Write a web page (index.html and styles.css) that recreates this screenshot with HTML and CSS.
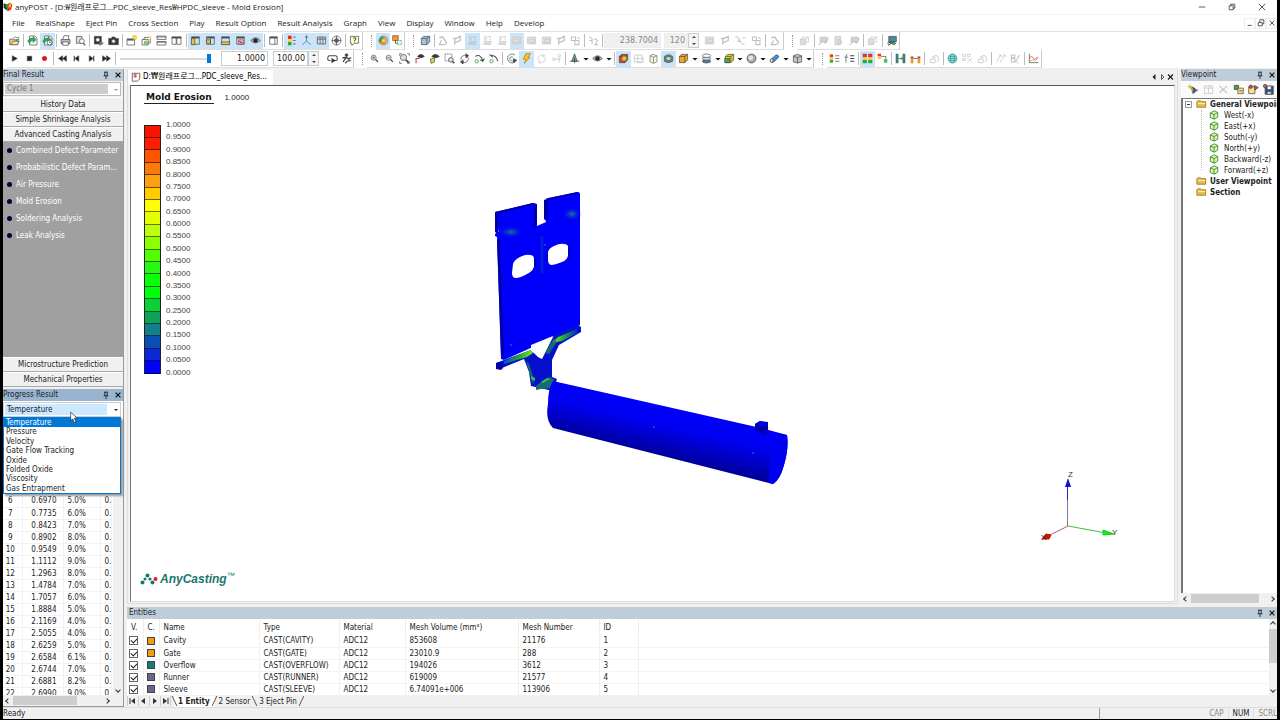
FILE: index.html
```
<!DOCTYPE html>
<html lang="en">
<head>
  <meta charset="UTF-8">
  <meta name="viewport" content="width=device-width, initial-scale=1.0">
  <title>anyPOST</title>
  <link rel="stylesheet" href="styles.css">
</head>
<body>
  <div class="app">
    <header class="titlebar">
      <svg class="app-icon" viewBox="0 0 16 16"><path d="M1 2l6 2v10l-6-5z" fill="#173d2a"/><path d="M7 3l4-2 4 3-2 8-6 3z" fill="#d8321e"/><path d="M9 4l4-2v5l-4 3z" fill="#f5c518"/><path d="M4 3l4 2v6l-4-3z" fill="#2e9a45"/></svg>
      <span class="title">anyPOST - [D:₩원래프로그...PDC_sleeve_Res₩HPDC_sleeve - Mold Erosion]</span>
      <div class="win-buttons">
        <button aria-label="Minimize"><svg viewBox="0 0 10 10"><path d="M1 5h8"/></svg></button>
        <button aria-label="Restore"><svg viewBox="0 0 10 10"><path d="M1.500 3.500h5v5h-5zM3.500 3.500v-2h5v5h-2"/></svg></button>
        <button aria-label="Close"><svg viewBox="0 0 10 10"><path d="M1 1l8 8M9 1l-8 8"/></svg></button>
      </div>
    </header>

    <nav class="menubar">
      <a href="#">File</a><a href="#">RealShape</a><a href="#">Eject Pin</a><a href="#">Cross Section</a><a href="#">Play</a><a href="#">Result Option</a><a href="#">Result Analysis</a><a href="#">Graph</a><a href="#">View</a><a href="#">Display</a><a href="#">Window</a><a href="#">Help</a><a href="#">Develop</a>
      <div class="mdi-buttons">
        <button aria-label="Minimize view"><svg viewBox="0 0 10 10"><path d="M2 8h5"/></svg></button>
        <button aria-label="Restore view"><svg viewBox="0 0 10 10"><path d="M1.500 4.500h5v4h-5zM3.500 4v-3h5v5h-2"/></svg></button>
        <button aria-label="Close view"><svg viewBox="0 0 10 10"><path d="M2 2l6 6M8 2l-6 6"/></svg></button>
      </div>
    </nav>

    <div class="toolbars">
      <div class="toolrow">
        <div class="group g-file" data-tools="open | reload reload2* | print preview | camera photo | newwin cascade tileh tilev | paneL* paneM* paneB* paneX* eye* | pane | legend* axes* table* wheel | help"></div>
        <div class="group g-color" data-tools="sphere* boxes"></div>
        <div class="group g-cut">
          <div class="tools" data-tools="cube | g-pin g-flag g-plane* g-plane g-plane g-box* g-box g-box g-flag g-steps | g-link |"></div>
          <input class="field off f-pos" type="text" value="238.7004" aria-label="Section position" disabled>
          <input class="field off f-div" type="text" value="120" aria-label="Section divisions" disabled>
          <span class="spin"><button aria-label="More divisions"></button><button aria-label="Fewer divisions"></button></span>
          <div class="tools" data-tools="g-box g-flag g-dots g-steps | g-pin"></div>
        </div>
        <div class="group g-extra" data-tools="g-layers | g-flag2 g-page g-flag2 | g-layers | monitor"></div>
      </div>
      <div class="toolrow">
        <div class="group g-play">
          <div class="tools" data-tools="play stop rec | rew prev next ffwd |"></div>
          <input class="slider" type="range" min="0" max="100" value="100" aria-label="Playback position">
          <input class="field f-now" type="text" value="1.0000" aria-label="Current value">
          <input class="field f-pct" type="text" value="100.00" aria-label="Percent">
          <span class="spin"><button aria-label="Increase"></button><button aria-label="Decrease"></button></span>
          <div class="tools" data-tools="loop runner"></div>
        </div>
        <div class="group g-view" data-tools="zoomin zoomout zoomfit eyeup eyecube zoombox rotate arcL arcR | spiral bolt* g-rotate g-nodes | cone v eye v | heart* g-mesh wire shade* ybox v disks v cubes v ball v tube v drum v"></div>
        <div class="group g-anal" data-tools="scale flist | grid2* swap | tee1 tee2 | g-undo | globe g-cross g-undo | g-lines g-bars | graph"></div>
      </div>
    </div>

    <main class="work">
      <aside class="left">
        <section class="panel final">
          <h2 class="caption">Final Result<span class="cap-tools"></span></h2>
          <div class="combo-off"><select class="cycle" aria-label="Cycle" disabled><option>Cycle 1</option></select></div>
          <button class="bar">History Data</button>
          <button class="bar">Simple Shrinkage Analysis</button>
          <button class="bar">Advanced Casting Analysis</button>
          <ul class="results">
            <li><a href="#">Combined Defect Parameter</a></li>
            <li><a href="#">Probabilistic Defect Param...</a></li>
            <li><a href="#">Air Pressure</a></li>
            <li><a href="#">Mold Erosion</a></li>
            <li><a href="#">Soldering Analysis</a></li>
            <li><a href="#">Leak Analysis</a></li>
          </ul>
          <button class="bar">Microstructure Prediction</button>
          <button class="bar">Mechanical Properties</button>
        </section>

        <section class="panel progress">
          <h2 class="caption active">Progress Result<span class="cap-tools"></span></h2>
          <div class="combo">
            <select class="kind" aria-label="Progress result"><option>Temperature</option></select>
            <ul class="dropdown" role="listbox" aria-label="Progress result options">
              <li role="option" aria-selected="true">Temperature</li>
              <li role="option">Pressure</li>
              <li role="option">Velocity</li>
              <li role="option">Gate Flow Tracking</li>
              <li role="option">Oxide</li>
              <li role="option">Folded Oxide</li>
              <li role="option">Viscosity</li>
              <li role="option">Gas Entrapment</li>
            </ul>
            <svg class="pointer" viewBox="0 0 12 18"><path d="M1 1v13l3-3 2.500 5.500 2.500-1-2.500-5.500h4.500z" fill="#fff" stroke="#222"/></svg>
          </div>
          <div class="steps">
            <div class="steps-clip">
              <table>
                <thead><tr><th></th><th></th><th></th><th></th></tr></thead>
                <tbody id="stepRows"></tbody>
              </table>
            </div>
            <div class="vscroll"><i></i><b></b></div>
          </div>
          <div class="hscroll"><i></i><span class="thumb"></span><b></b></div>
        </section>
      </aside>

      <div class="center">
        <div class="upper">
          <section class="document">
            <div class="doctabs">
              <a href="#" class="doctab"><svg viewBox="0 0 12 12"><path d="M1.500 1.500h9v7l-3 2.500h-6z" fill="#fff" stroke="#555"/><path d="M3 3.500h4M3 5.500h4M5 2v5" stroke="#c33"/></svg>D:₩원래프로그...PDC_sleeve_Res...</a>
              <svg class="tabnav" viewBox="0 0 24 8"><path d="M4.500 1v6l-3-3z" fill="#222"/><path d="M10.500 1.500v5l2.500-2.500z" fill="none" stroke="#555"/><path d="M17 1.500l5 5M22 1.500l-5 5" stroke="#222" stroke-width="1.300"/></svg>
            </div>
            <div class="canvas">
              <svg class="model" viewBox="470 180 340 320">
                <defs>
                  <linearGradient id="body" x1="680" y1="400" x2="664" y2="468" gradientUnits="userSpaceOnUse"><stop offset="0" stop-color="#00f"/><stop offset=".4" stop-color="#0000f2"/><stop offset=".68" stop-color="#00b"/><stop offset="1" stop-color="#00007d"/></linearGradient>
                  <linearGradient id="vein"><stop offset="0" stop-color="#0a50c0"/><stop offset=".5" stop-color="#1ea03c"/><stop offset="1" stop-color="#7af018"/></linearGradient>
                  <linearGradient id="vein2"><stop offset="0" stop-color="#7af018"/><stop offset=".5" stop-color="#1ea03c"/><stop offset="1" stop-color="#0a30c0"/></linearGradient>
                  <radialGradient id="spot"><stop offset="0" stop-color="#1c7a86"/><stop offset="1" stop-color="#00f" stop-opacity="0"/></radialGradient>
                </defs>
                <path fill="#0000fa" fill-rule="evenodd" d="M495 212l38-9 4 1v22l9-4v-1l-2-2v-18l4-3 30-6 2 1v132l-24 10-21 11-31 14-3-1-4-122-2-1v-2l4-3-4-3zM513 264q1-4 7-7 6-3 10-2 4 0 4 4v8q-1 4-7 7-7 4-11 4-4 0-4-5zM548 252q1-4 6-6 6-3 10-2 4 0 4 3v9q-1 4-6 6-7 3-11 3-3-1-3-5z"/>
                <path fill="#0000a8" d="M495 213l3 1v20l-3-2zM497 240l3-1 4 118-3-2zM544 200l4-1v19l-4 1zM534 205l3-1v20l-3 3zM495 212l38-9 3 1-38 10zM545 199l32-7 2 1-30 7z"/>
                <path fill="#0000b4" d="M534 257l2 2v8l-4 6 2-6zM568 246l2 2v8l-4 6 2-5z"/>
                <path stroke="#0632c8" stroke-width="3" opacity=".6" d="M542 236v37"/>
                <ellipse cx="511" cy="232" rx="13" ry="6" fill="url(#spot)"/>
                <ellipse cx="572" cy="214" rx="10" ry="7" fill="url(#spot)"/>
                <path fill="#0510cf" d="M496 363l8-3 27-10 7 7 4 2 12-24 24-10 3 2v5l-22 13-7 15v17l5 2-4 12-22-5-2-14-5-13-22 9-6-1z"/>
                <path fill="#0000a4" d="M496 363l5-1 2 6-2 2-5-1z"/>
                <path fill="url(#vein)" d="M504 361l26-11 3 3-6 4-23 7z"/>
                <path fill="url(#vein2)" d="M577 329l-19 8-6 6 10-2 15-8z"/>
                <path fill="#176b76" d="M536 386l6-5 8-4 4 3-3 8-10 1-5 1z"/>
                <path fill="#1c7c5a" opacity=".8" d="M526 361l3 3 5 15-1 6zM545 353l9-15 3 4-8 12z"/>
                <path fill="#32c23a" d="M531 376l4 2v3l-4-2zM541 382l6-4 3 1-7 4z"/>
                <path fill="#fff" d="M531 345l22-9-13 22-4-4-5-3z"/>
                <path fill="url(#body)" d="M553 381l208 47 26 7q2 13-3 30-4 15-11 19l-220-56q-8-8-5-24 0-16 5-23z"/>
                <path fill="#0000f0" d="M776 433l11 2q2 13-3 30-4 15-11 19l-4-1q-1-18 7-50z"/>
                <path fill="#0000b0" d="M755 424l5-3 8 1v8l-2 5-7-2-4-3z"/>
                <path fill="#0000e8" d="M755 424l5-3 8 2-4 3z"/>
                <path stroke="#456ce0" d="M653 427h2M752 453h2M510 345h2M544 245h2"/>
              </svg>
              <div class="result-title"><strong>Mold Erosion</strong><span>1.0000</span></div>
              <div class="legend">
                <div class="ramp" id="ramp"></div>
                <div class="ticks" id="ticks"></div>
              </div>
              <div class="brand">
                <svg viewBox="0 0 18 12"><g fill="#1a7770"><circle cx="2.500" cy="9.500" r="2"/><circle cx="5" cy="6" r="1.500"/><circle cx="7.500" cy="2.500" r="2"/><circle cx="10" cy="6" r="1.600"/><circle cx="12.500" cy="9.500" r="2"/></g><circle cx="15.500" cy="6" r="2" fill="#e02020"/></svg>
                <span>AnyCasting<sup>™</sup></span>
              </div>
              <svg class="triad" viewBox="1036 466 90 80">
                <path d="M1067.500 526v-38" stroke="#77a"/>
                <path d="M1067.500 500v-14" stroke="#22c"/>
                <path d="M1068 478l3 9h-6z" fill="#11c"/>
                <path d="M1068 526l38 7" stroke="#4b4"/>
                <path d="M1103 530l11 4-11 1z" fill="#1e2" stroke="#1c2"/>
                <path d="M1068 526l-20 10" stroke="#a66"/>
                <path d="M1042 539l4-5 5 1-2 4z" fill="#d10" stroke="#b10"/>
                <text x="1068" y="477">Z</text>
                <text x="1112" y="535">Y</text>
                <text x="1041" y="540">X</text>
              </svg>
            </div>
          </section>

          <aside class="panel viewpoint">
            <h2 class="caption">Viewpoint<span class="cap-tools"></span></h2>
            <div class="vp-tools" data-tools="addview g-winview g-x import export save"></div>
            <div class="tree">
              <ul>
                <li class="root"><span class="toggle"></span><svg class="folder"><use href="#folder"/></svg>General Viewpoint
                  <ul>
                    <li><svg><use href="#vcube"/></svg>West(-x)</li>
                    <li><svg><use href="#vcube"/></svg>East(+x)</li>
                    <li><svg><use href="#vcube"/></svg>South(-y)</li>
                    <li><svg><use href="#vcube"/></svg>North(+y)</li>
                    <li><svg><use href="#vcube"/></svg>Backward(-z)</li>
                    <li><svg><use href="#vcube"/></svg>Forward(+z)</li>
                  </ul>
                </li>
                <li class="root leaf"><svg class="folder"><use href="#folder"/></svg>User Viewpoint</li>
                <li class="root leaf"><svg class="folder"><use href="#folder"/></svg>Section</li>
              </ul>
            </div>
            <div class="hscroll wide"><i></i><span class="thumb"></span><b></b></div>
          </aside>
        </div>

        <section class="panel entities">
          <h2 class="caption">Entities<span class="cap-tools"></span></h2>
          <div class="ent-body">
            <table>
              <thead>
                <tr><th class="c-v">V.</th><th class="c-c">C.</th><th class="c-name">Name</th><th class="c-type">Type</th><th class="c-mat">Material</th><th class="c-vol">Mesh Volume (mm³)</th><th class="c-num">Mesh Number</th><th class="c-id">ID</th><th></th></tr>
              </thead>
              <tbody id="entityRows"></tbody>
            </table>
            <div class="vscroll"><i></i><span class="thumb"></span><b></b></div>
          </div>
          <div class="sheets">
            <svg class="sheetnav" viewBox="0 0 44 10"><path d="M.500 0v10M11.500 0v10M22.500 0v10M33.500 0v10M43.500 0v10" stroke="#ccc"/><path d="M3 2v6M41 2v6" stroke="#333"/><path d="M8 2v6L4 5zM18 2v6l-4-3zM26 2v6l4-3zM36 2v6l4-3z" fill="#333"/></svg>
            <a href="#" class="sheet on">1 Entity</a><a href="#" class="sheet back">2 Sensor</a><a href="#" class="sheet">3 Eject Pin</a>
          </div>
        </section>
      </div>
    </main>

    <footer class="status">
      <span class="ready">Ready</span>
      <span class="cell"></span><span class="key">CAP</span><span class="key on">NUM</span><span class="key">SCRL</span>
    </footer>
  </div>

  <svg class="sprite" aria-hidden="true">
    <symbol id="folder" viewBox="0 0 12 10"><path d="M1 8.500v-6l1-1h3l1 1h4.500v6z" fill="#e6c04a" stroke="#9a7d22"/><path d="M2 4h8v1H2z" fill="#fff0a8"/></symbol>
    <symbol id="vcube" viewBox="0 0 12 12"><path d="M1.500 3.500l5-2.500 4 2v5.500l-4 2.500-5-2z" fill="#d9f7a4" stroke="#38813a"/><path d="M1.500 3.500l4.500 2 4.500-2.500M6 5.500V11" fill="none" stroke="#38813a"/></symbol>
  </svg>
  <script src="script.js"></script>
</body>
</html>
```
FILE: styles.css
```
* { box-sizing: border-box; }
body {
  margin: 0;
  background: #000;
  color: #222;
  font-family: "DejaVu Sans Condensed", "Noto Sans CJK KR", sans-serif;
  font-size: 8px;
  line-height: 12px;
}
ul { list-style: none; margin: 0; padding: 0; }
a { color: inherit; text-decoration: none; }
button, input, select { font: inherit; color: inherit; margin: 0; padding: 0; border: 0; background: none; border-radius: 0; }
svg { display: block; flex: none; }
.sprite { position: absolute; width: 0; height: 0; }

.app {
  display: flex;
  flex-direction: column;
  height: 100vh;
  margin: 0 3px;
  border-bottom: 1px solid #000;
  background: #f0f0f0;
}

/* title and menu */
.titlebar {
  display: flex;
  align-items: center;
  height: 14px;
  background: #fff;
  font-family: "Open Sans", "Noto Sans CJK KR", sans-serif;
}
.app-icon { width: 10px; height: 10px; margin-right: 2px; }
.win-buttons { display: flex; margin-left: auto; }
.win-buttons button { width: 30px; height: 14px; display: grid; place-items: center; }
.win-buttons svg, .mdi-buttons svg { width: 8px; height: 8px; fill: none; stroke: #333; }
.menubar {
  display: flex;
  align-items: center;
  gap: 11px;
  height: 18px;
  padding-left: 9px;
  background: #fff;
  border-top: 1px solid #f4f4f4;
  border-bottom: 1px solid #e0e0e0;
  font-family: "Open Sans", sans-serif;
}
.mdi-buttons { display: flex; margin-left: auto; }
.mdi-buttons button { width: 11px; height: 11px; display: grid; place-items: center; border: 1px solid #eee; }

/* toolbars */
.toolbars { background: #fff; }
.toolrow { display: flex; height: 18px; }
.group {
  position: relative;
  display: flex;
  align-items: center;
  flex: none;
  margin-left: 13px;
  border-right: 1px solid #ccc;
  border-bottom: 1px solid #ddd;
}
.group:first-child { margin-left: 4px; }
.group:not(:first-child)::before {
  content: "";
  position: absolute;
  left: -5px;
  top: 3px;
  height: 12px;
  border-left: 1px dotted #999;
}
.tools { display: flex; flex: 1; align-items: center; }
.g-file { width: 356px; }
.g-color { width: 29px; }
.g-cut { width: 366px; }
.g-extra { width: 103px; }
.g-play { width: 347px; }
.g-view { width: 447px; }
.g-anal { width: 215px; }
.tool { flex: 1 1 15px; min-width: 0; height: 16px; display: grid; place-items: center; }
.tool svg { width: 11px; height: 11px; fill: none; stroke: #444; }
.tool.on { background: #cce4f7; }
.tool.dim svg { stroke: #c0c0c0; }
.tool.drop { flex: 0 1 8px; }
.tool.drop svg { width: 6px; height: 6px; }
.tool.small svg { width: 9px; height: 9px; }
.sep { flex: none; width: 1px; height: 13px; margin: 0 1px; background: #bbb; }
.field {
  height: 15px;
  border: 1px solid #ccc;
  padding: 0 2px;
  text-align: right;
  font-family: "DejaVu Sans", sans-serif;
}
.field.off { background: #f0f0f0; color: #888; border-color: #eee; }
.f-pos { width: 57px; margin-right: 3px; }
.f-div { width: 24px; }
.f-now { width: 47px; margin-right: 5px; }
.f-pct { width: 35px; }
.spin { display: flex; flex-direction: column; width: 11px; height: 15px; margin-right: 3px; border: 1px solid #ccc; background: #f4f4f4; }
.spin button { flex: 1; display: grid; place-items: center; }
.spin button::before { content: ""; border: 2px solid transparent; border-top: 0; border-bottom: 2px solid #444; }
.spin button + button::before { border-bottom: 0; border-top: 2px solid #444; }
.g-play .tools:first-child { flex: none; width: 110px; }
.g-play .tools:last-child { padding-left: 3px; }
.g-cut .tools:first-child { flex: none; width: 186px; }
.slider { width: 91px; height: 12px; margin: 0 10px 0 3px; appearance: none; }
.slider::-webkit-slider-runnable-track { height: 2px; background: #d8d8d8; }
.slider::-webkit-slider-thumb { appearance: none; width: 4px; height: 9px; margin-top: -4px; background: #0078d7; }

/* panels */
.work { display: flex; flex: 1; min-height: 0; padding-top: 1px; }
.caption {
  display: flex;
  align-items: center;
  flex: none;
  height: 12px;
  margin: 0;
  background: #bfcddb;
  font-size: 8px;
  font-weight: normal;
  line-height: 12px;
}
.caption.active { background: #99b4d1; }
.cap-tools { display: flex; gap: 4px; margin-left: auto; margin-right: 1px; }
.cap-tools svg { width: 8px; height: 8px; fill: none; stroke: #111; }
.panel { display: flex; flex-direction: column; }
.left { display: flex; flex-direction: column; flex: none; width: 121px; border-right: 1px solid #999; }
.final { flex: none; height: 318px; margin-bottom: 2px; }
.cycle, .kind {
  appearance: none;
  display: block;
  width: 118px;
  height: 14px;
  padding: 0 3px;
  border: 1px solid #bbb;
  background: linear-gradient(#ccc, #ccc) 1px 1px / 103px 10px no-repeat #fff;
  color: #777;
  opacity: 1;
}
.combo-off { position: relative; flex: none; height: 16px; padding-top: 1px; }
.bar { flex: none; height: 15px; border-bottom: 1px solid #aaa; border-top: 1px solid #fff; background: #f0f0f0; line-height: 12px; }
.results { flex: 1; background: #a0a0a0; color: #fff; }
.results li { display: flex; align-items: center; height: 17px; white-space: nowrap; overflow: hidden; }
.results li::before { content: ""; width: 5px; height: 5px; margin: 0 4px; border-radius: 50%; background: #000040; flex: none; }
.progress { flex: 1; min-height: 0; border-bottom: 1px solid #999; }
.combo { position: relative; flex: none; height: 17px; padding-top: 1px; background: #fff; }
.kind {
  height: 15px;
  border-color: #ccc;
  background: linear-gradient(#cce8ff, #cce8ff) 1px 1px / 102px 11px no-repeat #fff;
  color: #222;
}
.combo::after, .combo-off::after {
  content: "";
  position: absolute;
  right: 5px;
  top: 8px;
  border: 2px solid transparent;
  border-top-color: #222;
}
.combo-off::after { border-top-color: #999; }
.dropdown {
  position: absolute;
  z-index: 2;
  top: 16px;
  left: 0;
  display: flex;
  flex-direction: column;
  width: 118px;
  height: 77px;
  border: 1px solid #0078d7;
  background: #fff;
  box-shadow: 2px 2px 2px #999;
}
.dropdown li { flex: 1; padding-left: 2px; line-height: 9px; }
.dropdown [aria-selected] { background: #0078d7; color: #fff; }
.pointer { position: absolute; z-index: 3; left: 67px; top: 10px; width: 8px; height: 13px; }
.steps { display: flex; flex: 1; min-height: 0; background: #fff; }
.steps-clip { flex: 1; overflow: hidden; }
table { border-collapse: collapse; table-layout: fixed; }
th, td { padding: 0; font-weight: normal; text-align: left; white-space: nowrap; overflow: hidden; }
.steps table { width: 109px; }
.steps tr { height: 12px; }
.steps th { height: 77px; background: #fff; }
.steps td { border-right: 1px solid #f2f2f2; border-bottom: 1px solid #f2f2f2; line-height: 11px; }
.steps th:nth-child(1) { width: 19px; }
.steps th:nth-child(2) { width: 41px; }
.steps th:nth-child(3) { width: 37px; }
.steps td:nth-child(1) { text-align: center; padding-right: 4px; }
.steps td:nth-child(2) { text-align: right; padding-right: 6px; }
.steps td:nth-child(3) { padding-left: 4px; }
.steps td:nth-child(4) { padding-left: 4px; }

/* scrollbars */
.vscroll { display: flex; flex-direction: column; flex: none; width: 10px; padding: 3px 0; align-items: center; background: #f0f0f0; }
.hscroll { display: flex; align-items: center; flex: none; height: 11px; padding: 0 3px; background: #f0f0f0; }
.vscroll i, .vscroll b, .hscroll i, .hscroll b { width: 4px; height: 4px; border: solid #333; border-width: 1px 0 0 1px; }
.vscroll i { transform: rotate(45deg); }
.vscroll b { margin-top: auto; transform: rotate(225deg); }
.hscroll i { transform: rotate(-45deg); }
.hscroll b { margin-left: auto; transform: rotate(135deg); }
.hscroll .thumb { width: 64px; height: 9px; margin-left: 3px; background: #cdcdcd; }
.hscroll.wide .thumb { width: 68px; }
.progress .hscroll { padding-right: 14px; }
.entities .vscroll { width: 8px; }
.entities .vscroll .thumb { width: 8px; height: 34px; margin-top: 3px; background: #cdcdcd; }

/* document */
.center { display: flex; flex-direction: column; flex: 1; min-width: 0; padding-left: 3px; }
.upper { display: flex; flex: 1; min-height: 0; gap: 2px; }
.document { display: flex; flex-direction: column; flex: 1; min-width: 0; border: 1px solid #ddd; border-top: 0; padding: 0 2px 1px; }
.doctabs { display: flex; flex: none; align-items: center; justify-content: space-between; height: 16px; margin-left: -2px; }
.doctab { display: flex; align-items: center; gap: 2px; height: 15px; padding: 0 6px 0 3px; background: #fff; color: #000; }
.doctab svg { width: 10px; height: 10px; }
.tabnav { width: 24px; height: 8px; }
.canvas {
  position: relative;
  flex: 1;
  padding: 6px 13px;
  border: 1px solid #ddd;
  border-top: 1px solid #555;
  border-left: 1px solid #777;
  background: #fff;
}
.model { position: absolute; left: 339px; top: 94px; width: 340px; height: 320px; }
.result-title { display: flex; gap: 11px; font-family: "Liberation Sans", sans-serif; line-height: 12px; }
.result-title strong { padding: 0 2px; border-bottom: 1px solid #222; font-size: 9px; line-height: 10px; color: #111; font-family: "DejaVu Sans", sans-serif; }
.legend { display: flex; align-items: center; gap: 5px; height: 260px; margin-top: 15px; font-family: "Liberation Sans", sans-serif; }
.ramp { display: flex; flex-direction: column; width: 17px; height: 249px; border: 1px solid #222; border-bottom: 0; }
.ramp div { flex: 1; border-bottom: 1px solid rgba(0, 0, 0, 0.55); }
.ticks { display: flex; flex-direction: column; height: 260px; color: #444; }
.ticks span { flex: 1; line-height: 12px; }
.brand {
  position: absolute;
  left: 9px;
  bottom: 15px;
  display: flex;
  align-items: center;
  gap: 2px;
  color: #1a7770;
  font: italic bold 12px/14px "Liberation Sans", sans-serif;
}
.brand svg { width: 18px; height: 12px; }
.brand sup { font-size: 8px; line-height: 8px; font-style: normal; font-weight: normal; }
.triad { position: absolute; right: 48px; bottom: 55px; width: 90px; height: 80px; font: 8px "Liberation Sans", sans-serif; }
.triad text { fill: #333; }

/* viewpoint */
.viewpoint { flex: none; width: 97px; padding-left: 1px; overflow: hidden; }
.vp-tools { display: flex; flex: none; height: 17px; padding: 1px 0 1px 5px; align-items: center; background: #fafafa; }
.vp-tools .tool { flex: 0 0 15px; height: 14px; }
.tree { flex: 1; border-left: 2px solid #777; border-top: 1px solid #777; background: #fff; overflow: hidden; white-space: nowrap; }
.tree ul { position: relative; margin-left: 2px; }
.tree li { line-height: 11px; position: relative; }
.tree svg { display: inline-block; vertical-align: middle; width: 10px; height: 10px; margin: -2px 5px 0 0; }
.tree .folder { margin-right: 3px; width: 11px; }
.root { font-weight: bold; }
.root.leaf { padding-left: 11px; }
.toggle { display: inline-block; width: 7px; height: 7px; margin-right: 4px; border: 1px solid #999; vertical-align: middle; background: linear-gradient(#333, #333) center / 3px 1px no-repeat; }
.tree .root ul { margin-left: 16px; padding-left: 8px; font-weight: normal; }
.root ul::before { content: ""; position: absolute; left: 0; top: 0; height: 60px; border-left: 1px dotted #bbb; }

/* entities */
.entities { flex: none; height: 100px; margin-top: 3px; }
.entities .caption { padding-left: 2px; }
.ent-body { display: flex; flex: 1; min-height: 0; background: #fff; overflow: hidden; }
.entities table { flex: 1; width: 100%; }
.entities th { height: 16px; line-height: 15px; border-right: 1px solid #eee; padding-left: 4px; }
.entities td { height: 12px; line-height: 11px; border-right: 1px solid #f0f0f0; border-bottom: 1px solid #f4f4f4; padding-left: 4px; }
.entities th:last-child, .entities td:last-child { border-right: 0; }
.c-v, .c-c { width: 16px; }
.c-name { width: 100px; }
.c-type { width: 80px; }
.c-mat { width: 66px; }
.c-vol { width: 113px; }
.c-num { width: 81px; }
.c-id { width: 39px; }
.entities input {
  display: block;
  appearance: none;
  width: 9px;
  height: 9px;
  margin-left: -2px;
  border: 1px solid #666;
  position: relative;
}
.entities input:checked::after { content: ""; position: absolute; left: 1px; top: 1px; width: 5px; height: 3px; border: solid #222; border-width: 0 0 1px 1px; transform: rotate(-45deg); }
.swatch { display: block; width: 8px; height: 8px; margin-left: -1px; border: 1px solid #444; }
.sheets { display: flex; flex: none; height: 12px; align-items: center; background: #f0f0f0; }
.sheetnav { width: 44px; height: 10px; }
.sheet { position: relative; height: 11px; line-height: 11px; padding: 0 5px 0 4px; }
.sheet::after { content: ""; position: absolute; right: 0; top: 0; height: 10px; border-right: 1px solid #555; transform: skewX(-25deg); }
.sheet.back::after, .sheet.on::before { transform: skewX(25deg); }
.sheet.on { margin-left: 3px; background: #fff; font-weight: bold; }
.sheet.on::before { content: ""; position: absolute; left: 0; top: 0; height: 10px; border-left: 1px solid #555; }

/* status bar */
.status { display: flex; flex: none; height: 12px; border-top: 1px solid #ddd; color: #888; line-height: 12px; }
.ready { flex: 1; color: #222; }
.cell { width: 106px; border-left: 1px solid #999; }
.key { padding: 0 4px; border-right: 1px solid #ddd; }
.key.on { color: #222; }
.key:last-child { padding-right: 0; border: 0; }
```
FILE: script.js
```
// Icon bodies, all on a 16 x 16 grid
const box = '<path d="M2.500 2.500h11v11h-11z"/><path d="M2.500 4h11" stroke-width="2"/>';
const cube = c => `<path d="M2 5l3-3h9v8l-4 4H2z" fill="${c}"/><path d="M2 5h8v9M10 5l4-3"/>`;
const eyeShape = '<path d="M1 8q7-8 14 0q-7 7-14 0z" fill="#bbb"/><circle cx="8" cy="8" r="3" fill="#222"/>';
const lens = '<circle cx="6.500" cy="6.500" r="4.500" fill="#ddd"/><path d="M10 10l4 4" stroke-width="2.500"/>';
const cycleShape = '<path d="M3 10a5.500 5.500 0 0 1 8-6M13 6a5.500 5.500 0 0 1-8 7"/><path d="M10 1l4 3-4 3zM6 10l-4 3 4 3z" fill="#444"/>';

const icons = {
  open: '<path d="M1 14V6h5l1 1h6v7z" fill="#f0d070"/><path d="M3 14l3-5h9l-3 5z" fill="#ffe9a0"/><path d="M6 5q3-4 6-1l2-1v4h-4" stroke="#284"/>',
  reload: '<path d="M3.500 1.500h8l3 3v10h-11z" fill="#fff"/><path d="M1 9q3-6 8-4V2l4 5-4 4V8Q5 7 4 12z" fill="#3aa655" stroke="#185"/>',
  print: '<path d="M4 6l2-5h7l-1 5"/><path d="M1.500 6.500h13v6h-13z" fill="#bbb"/><path d="M4 10h8v5H4z" fill="#fff"/>',
  preview: '<path d="M2 2h8v10H2z" fill="#ddd"/><circle cx="10" cy="9" r="3.500" fill="#fff"/><path d="M12 12l3 3" stroke="#a52" stroke-width="2"/>',
  camera: '<path d="M2 2h10v11H2z" fill="#333"/><circle cx="7" cy="7" r="3" fill="#fff"/><path d="M9 9l6 3-5 3z" fill="#6a6"/>',
  photo: '<path d="M1 5h4l1-2h4l1 2h4v9H1z" fill="#333"/><circle cx="8" cy="9" r="3" fill="#ddd"/>',
  newwin: '<path d="M1.500 5.500h11v9h-11z" fill="#fff"/><path d="M2 7h10" stroke-width="2"/><path d="M10 1h5v5h-5z" fill="#fd4" stroke="#db2"/>',
  cascade: '<path d="M4.500 3.500h9v8h-9z"/><path d="M1.500 6.500h9v8h-9z" fill="#fff"/><path d="M5 9h4v4H5z" fill="#9d5" stroke="#6a3"/><path d="M11 1h4v4h-4z" fill="#fe5" stroke="none"/>',
  tileh: '<path d="M1.500 1.500h13v5h-13zM1.500 9.500h13v5h-13z" fill="#fff"/><path d="M1 3h14M1 10.500h14"/>',
  tilev: '<path d="M1.500 2.500h6v11h-6zM8.500 2.500h6v11h-6z" fill="#fff"/><path d="M1 4h14" stroke-width="2"/>',
  paneL: box + '<path d="M2 5h5v9H2z" fill="#e8c82a"/>',
  paneM: box + '<path d="M2 7h6v5H2z" fill="#e8c82a"/><path d="M8 5v8"/>',
  paneB: box + '<path d="M2 10h12v4H2z" fill="#e8c82a"/>',
  paneX: box + '<path d="M5 7h7v6H5z" fill="#ddd" stroke="#a33"/><path d="M6 9l5 3" stroke="#c33" stroke-width="2"/>',
  eye: eyeShape,
  pane: box + '<path d="M10 5v8"/>',
  legend: '<path d="M3 1h5v5H3z" fill="#e22" stroke="none"/><path d="M3 6h5v4H3z" fill="#fd2" stroke="none"/><path d="M3 10h5v5H3z" fill="#2a4" stroke="none"/><path d="M10 3h4M10 8h4M10 13h4"/>',
  axes: '<path d="M8 9V1M8 9l-6 5M8 9l6 5" stroke="#26a"/><path d="M6 4l2-3 2 3" stroke="#262"/>',
  table: '<path d="M2 3h12v10H2zM2 6h12M6 3v10M10 3v10"/>',
  wheel: '<circle cx="8" cy="8" r="6.500"/><circle cx="8" cy="8" r="3" fill="#888"/><path d="M8 1v14M1 8h14"/>',
  help: '<path d="M2 2h12v10H8l-4 3v-3H2z" fill="#ffc"/><path d="M6 5q2-2 4 0 0 2-2 3v1M8 10v1" stroke="#553" stroke-width="1.500"/>',
  sphere: '<circle cx="8" cy="8" r="6.500" fill="#bbb" stroke="#888"/><path d="M8 1.500a6.500 6.500 0 0 0-5 11l5-4z" fill="#2a6" stroke="none"/><path d="M8 2q5 3 2 12-5 1-7-2z" fill="#e83" stroke="none"/><circle cx="8" cy="8" r="2" fill="#ffe94a" stroke="none"/>',
  boxes: '<path d="M1 1h8v7H1z" fill="#e7a22b" stroke="#a33"/><path d="M8 8h6v6H8z" fill="#dfd" stroke="#494" stroke-dasharray="2 1"/><path d="M5 8v4h3" stroke="#222"/>',
  cube: cube('#9fc5dd'),
  monitor: '<path d="M4 2h11v8H4z" fill="#3d8fa8"/><path d="M2 12l6-2 6 3M3 15l6-4" stroke-width="1.500"/><circle cx="11" cy="12" r="2" fill="#5b5"/>',
  play: '<path d="M4 3l9 5-9 5z" fill="#222"/>',
  stop: '<path d="M4 4h8v8H4z" fill="#222"/>',
  rec: '<circle cx="8" cy="8" r="4" fill="#d11" stroke="#d11"/>',
  rew: '<path d="M8 3v10L1 8zM15 3v10L8 8z" fill="#222"/>',
  prev: '<path d="M4 3v10" stroke-width="2"/><path d="M12 3v10L5 8z" fill="#222"/>',
  next: '<path d="M12 3v10" stroke-width="2"/><path d="M4 3v10l7-5z" fill="#222"/>',
  ffwd: '<path d="M1 3v10l7-5zM8 3v10l7-5z" fill="#222"/>',
  loop: '<path d="M5 11H3q-2 0-2-3t2-4h10q2 1 2 4t-2 3h-3" stroke-width="1.500"/><path d="M7 8v6l5-3z" fill="#333"/>',
  runner: '<circle cx="8" cy="3" r="2" fill="#444"/><path d="M2 7l6-1 5 5-4 1-3 3M8 6L3 13M10 8l5-1" stroke-width="1.800"/>',
  zoomin: lens + '<path d="M4 6.500h5M6.500 4v5"/>',
  zoomout: lens + '<path d="M4 6.500h5"/>',
  zoomfit: lens + '<path d="M1 4V1h3M12 1h3v3M1 12v3h3M15 12v3h-3"/>',
  eyeup: '<path d="M5 5q5-6 10 0-5 4-10 0z" fill="#333"/><path d="M3 15V8h5" stroke="#a44" stroke-width="1.500"/>',
  eyecube: '<path d="M4 5q5-6 11 0-5 4-11 0z" fill="#333"/><path d="M2 9l6-2v6l-5 2z" fill="#dd3"/>',
  zoombox: '<path d="M1.500 1.500h10v10h-10z" stroke-dasharray="2 1"/><circle cx="10" cy="10" r="3.500" fill="#ddd"/><path d="M12 12l3 3" stroke-width="2"/>',
  rotate: cycleShape,
  arcL: '<path d="M2 5q7-5 11 7M13 12l2-4M13 12l-4-2" stroke-width="1.500"/><circle cx="4" cy="12" r="2.500" fill="#dfd" stroke="#484"/>',
  arcR: '<path d="M2 3q11 0 12 9M3 3l4 3" stroke-width="1.500"/><circle cx="5" cy="12" r="2.500" fill="#dfd" stroke="#484"/>',
  spiral: '<path d="M13 3a6.500 6.500 0 1 0 2 7M10 6a3 3 0 1 0 1 4h4" stroke="#354"/><path d="M11 8l4 3-4 3z" fill="#353"/>',
  bolt: '<path d="M7 1h7l-4 5h3l-8 9 2-6H3z" fill="#ffc51a" stroke="#a72"/>',
  cone: '<path d="M8 1l4 11H4z" fill="#6a8"/><path d="M1 12h14M8 7v8"/>',
  v: '<path d="M1 5h14l-7 7z" fill="#111" stroke="none"/>',
  heart: cube('#d33') + '<path d="M3 6h6v7H3z" fill="#e33" stroke="none"/><circle cx="9" cy="8" r="3.500" fill="#fb2" stroke="#3a3"/>',
  wire: '<path d="M3 4l4-2 6 2v9l-5 2-5-2zM3 4l5 2 5-2M8 6v9" fill="#eef6e6" stroke="#675"/>',
  shade: '<path d="M2 5q6-5 12 0v7q-6 4-12 0z" fill="#6a8f85"/><ellipse cx="8" cy="8" rx="4" ry="3" fill="#b9dfc9"/>',
  ybox: cube('#f0a821'),
  disks: '<ellipse cx="8" cy="12" rx="6" ry="2.500" fill="#57a"/><ellipse cx="8" cy="8" rx="6" ry="2.500" fill="#cde"/><ellipse cx="8" cy="4" rx="6" ry="2.500" fill="#fff"/>',
  cubes: cube('#ecc92b') + '<path d="M1 8h7v6H1z" fill="#4a5"/>',
  ball: '<circle cx="8" cy="8" r="6.500" fill="#aaa"/><circle cx="7" cy="7" r="3.500" fill="#e4e4e4" stroke="none"/>',
  tube: '<path d="M2 10l8-7q4-1 4 3l-7 7q-6 2-5-3z" fill="#4b8fd0" stroke="#246"/><ellipse cx="4" cy="11" rx="2" ry="2.500" fill="#eee"/>',
  drum: '<path d="M2 4q6-4 12 0v9q-6 3-12 0z" fill="#bcc6cc"/><path d="M2 5q6 3 12 0M8 7v8"/>',
  scale: '<path d="M1 2h5v4H1z" fill="#e33" stroke="none"/><path d="M1 6h5v4H1z" fill="#fc3" stroke="none"/><path d="M1 10h5v4H1z" fill="#3a4" stroke="none"/><path d="M9 4h6M9 8h6M9 12h6"/>',
  flist: '<path d="M5 2q-3 0-2 12M1 6h5"/><path d="M9 4h6M9 8h6M9 12h6" stroke-width="1.500"/>',
  grid2: '<path d="M1 1h6v5H1zM9 1h6v5H9z" fill="#d33" stroke="none"/><path d="M1 6h6v4H1zM9 6h6v4H9z" fill="#fc3" stroke="none"/><path d="M1 10h6v5H1zM9 10h6v5H9z" fill="#2a4" stroke="none"/>',
  swap: '<path d="M1 1h5v4H1z" fill="#e33" stroke="none"/><path d="M1 5h5v4H1z" fill="#fc3" stroke="none"/><path d="M10 9h5v5h-5z" fill="#4b5" stroke="none"/><path d="M6 5h7v4"/>',
  tee1: '<path d="M1 1h4v14H1zM11 1h4v14h-4z" fill="#3b7f6e" stroke="none"/><path d="M5 8h6M9 6l2 2-2 2"/>',
  tee2: '<path d="M1 8h4v7H1zM11 8h4v7h-4z" fill="#e8a11e" stroke="none"/><path d="M1 5h4v3H1zM11 5h4v3h-4z" fill="#c33" stroke="none"/><path d="M5 8h6"/>',
  globe: '<circle cx="8" cy="8" r="6.500" fill="#9fe0cf" stroke="#299"/><path d="M2 8h12M3 5h10M3 11h10" stroke="#299"/><ellipse cx="8" cy="8" rx="3" ry="6" stroke="#299"/>',
  graph: '<path d="M2 1v13h13"/><path d="M2 8q3-6 6 0t6-2" stroke="#d33"/><path d="M2 12q6-1 12-6" stroke="#c93"/>',
  addview: '<path d="M5 5l9 4-7 5z" fill="#fff"/><path d="M7 4l5 5-4 4z" fill="#555"/><path d="M3 1v6M0 4h6" stroke="#db3" stroke-width="2"/>',
  import: '<path d="M2 2h6v6H2z" fill="#8b5"/><path d="M7 6h8v8H7z" fill="#ffe38a"/><circle cx="5" cy="5" r="3" fill="#5a4"/><path d="M9 10h5" stroke="#222"/>',
  export: '<path d="M1 4h9v10H1z" fill="#ffe08a"/><path d="M9 2l6 3-5 4z" fill="#d44"/><circle cx="4" cy="4" r="2.500" fill="#d44"/>',
  save: '<path d="M3 3h12v12H3z" fill="#2b4f9c"/><path d="M6 3h6v5H6z" fill="#fff"/><path d="M6 11h6v4H6z" fill="#ddd"/><circle cx="3" cy="3" r="2.500" fill="#d55"/>',
  'g-pin': '<path d="M2 4l5-1 6 9M5 8l-3 6h6l4-1" stroke-width="2"/>',
  'g-flag': '<path d="M4 14V6l8-4v6l-8 3M1 5h6" stroke-width="1.800"/>',
  'g-flag2': '<path d="M3 3h10v7H3z" fill="#d4d4d4"/><path d="M1 14l6-5 4 3 4-8" stroke-width="1.500"/>',
  'g-plane': '<path d="M4 1v9h10M6 8V3l6-1v6M1 14l4-4h9"/><path d="M3 13h10" stroke-width="2"/>',
  'g-box': '<path d="M2 3h12v10H2z" fill="#e2e2e2"/><path d="M5 6h7v5H5z"/>',
  'g-steps': '<path d="M2 3h6v5H2zM7 8h6v6H7zM11 3l3 3" stroke-width="1.500"/>',
  'g-link': '<path d="M2 2l5 5M2 8h4v5M9 5l5 3-4 6h5" stroke-width="1.500"/>',
  'g-dots': '<path d="M1 3h4M11 4h4M3 9h4M10 13h4M5 4l4 8" stroke-width="1.500"/>',
  'g-layers': '<path d="M2 6h8v8H2z" fill="#ddd"/><path d="M5 6V3h9v7h-4M10 6l4-3"/>',
  'g-page': '<path d="M3 2h8v12H3z" fill="#ddd"/><path d="M8 6l6 4-6 4z"/>',
  'g-rotate': '<path d="M3 10a5.500 5.500 0 0 1 8-6M13 6a5.500 5.500 0 0 1-8 7M10 1l3 3-4 2M6 10l-3 3 4 2"/>',
  'g-nodes': '<circle cx="4" cy="9" r="2"/><circle cx="12" cy="4" r="2"/><path d="M6 9h8M12 6v8"/>',
  'g-mesh': '<path d="M2 3h11v10H2zM2 8h11M7 3v10M13 5l2 2v7H5"/>',
  'g-undo': '<path d="M2 9h7v5H2zM6 7q2-6 7-2 3 4-1 8"/><path d="M4 4l3 4 3-3"/>',
  'g-cross': '<path d="M1 2h4v3H1zM8 2h4v3H8zM1 8h4v3H1zM8 7l7 7M15 7l-7 7"/>',
  'g-lines': '<path d="M2 13L8 3M7 14l7-11M6 3h3v3M12 3h3v3"/>',
  'g-bars': '<path d="M2 3h5v4H2zM2 8h5v5H2zM8 13l6-10M10 14h2" stroke-width="1.500"/>',
  'g-winview': '<path d="M2 3h12v11H2zM2 6h12M8 6v8M10 1v5"/>',
  'g-x': '<path d="M2 3l11 10M13 3L2 13" stroke-width="1.500"/>'
};
icons.reload2 = icons.reload + '<circle cx="11" cy="11" r="3.500" fill="#fff"/><path d="M11 9v2h2"/>';
const small = ['play', 'stop', 'rec', 'rew', 'prev', 'next', 'ffwd', 'zoomin', 'zoomout'];

// "|" is a divider, a trailing "*" marks a pressed button
document.querySelectorAll('[data-tools]').forEach(bar => {
  bar.innerHTML = bar.dataset.tools.split(' ').map(t => {
    if (t === '|') return '<span class="sep"></span>';
    const name = t.replace('*', '');
    let cls = 'tool';
    if (t.endsWith('*')) cls += ' on';
    if (name.startsWith('g-')) cls += ' dim';
    if (name === 'v') cls += ' drop';
    if (small.includes(name)) cls += ' small';
    return `<button class="${cls}" aria-label="${name}"><svg viewBox="0 0 16 16">${icons[name]}</svg></button>`;
  }).join('');
});

document.querySelectorAll('.cap-tools').forEach(c => {
  c.innerHTML = '<svg viewBox="0 0 10 10"><path d="M3.500 1v5M6.500 1v5M3 1.500h4M2 6h6M5 6v4"/></svg>' +
    '<svg viewBox="0 0 10 10"><path d="M2 2l6 6M8 2l-6 6" stroke-width="1.500"/></svg>';
});

const steps = [
  [6, '0.6970', '5.0%'], [7, '0.7735', '6.0%'], [8, '0.8423', '7.0%'], [9, '0.8902', '8.0%'], [10, '0.9549', '9.0%'],
  [11, '1.1112', '9.0%'], [12, '1.2963', '8.0%'], [13, '1.4784', '7.0%'], [14, '1.7057', '6.0%'], [15, '1.8884', '5.0%'],
  [16, '2.1169', '4.0%'], [17, '2.5055', '4.0%'], [18, '2.6259', '5.0%'], [19, '2.6584', '6.1%'], [20, '2.6744', '7.0%'],
  [21, '2.6881', '8.2%'], [22, '2.6990', '9.0%']
];
document.getElementById('stepRows').innerHTML = steps.map(s =>
  `<tr><td>${s[0]}</td><td>${s[1]}</td><td>${s[2]}</td><td>0.</td></tr>`).join('');

const entities = [
  ['Cavity', 'CAST(CAVITY)', '853608', '21176', '#f79a10'],
  ['Gate', 'CAST(GATE)', '23010.9', '288', '#f79a10'],
  ['Overflow', 'CAST(OVERFLOW)', '194026', '3612', '#0c7f78'],
  ['Runner', 'CAST(RUNNER)', '619009', '21577', '#66668f'],
  ['Sleeve', 'CAST(SLEEVE)', '6.74091e+006', '113906', '#66668f']
];
document.getElementById('entityRows').innerHTML = entities.map((e, i) =>
  `<tr><td><input type="checkbox" checked aria-label="Show ${e[0]}"></td>
   <td><span class="swatch" style="background:${e[4]}"></span></td>
   <td>${e[0]}</td><td>${e[1]}</td><td>ADC12</td><td>${e[2]}</td><td>${e[3]}</td><td>${i + 1}</td><td></td></tr>`).join('');

const colors = ['#fa1400', '#fb1e00', '#fb5500', '#fb7a08', '#faa012', '#ffcc00', '#ffff00', '#e6ff00', '#beff10', '#8cff00',
  '#50ff00', '#28f814', '#0aff0a', '#00ff0a', '#0ccf3a', '#0fa05a', '#127f8c', '#0a50b4', '#0a28d8', '#0000ff'];
document.getElementById('ramp').innerHTML = colors.map(c => `<div style="background:${c}"></div>`).join('');
let ticks = '';
for (let i = 20; i >= 0; i--) ticks += `<span>${(i / 20).toFixed(4)}</span>`;
document.getElementById('ticks').innerHTML = ticks;
```
